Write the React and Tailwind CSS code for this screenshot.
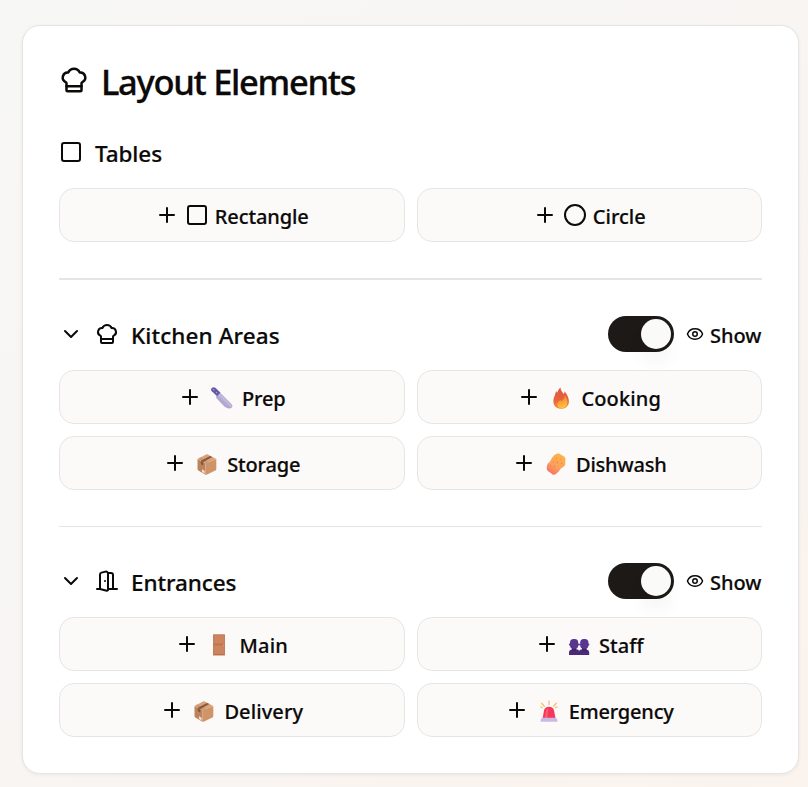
import { useState } from 'react'
import { ChefHat, ChevronDown, Circle, Eye, Plus, Square } from 'lucide-react'

function DoorIcon() {
  return (
    <svg
      width="24"
      height="24"
      viewBox="0 0 24 24"
      fill="none"
      stroke="currentColor"
      strokeWidth="2"
      strokeLinecap="round"
      strokeLinejoin="round"
    >
      <path d="M13 4h3a2 2 0 0 1 2 2v14" />
      <path d="M2 20h3" />
      <path d="M13 20h9" />
      <path d="M10 12v.01" />
      <path d="M13 4.562v16.157a1 1 0 0 1-1.242.97L5 20V5.562a2 2 0 0 1 1.515-1.94l4-1A2 2 0 0 1 13 4.561Z" />
    </svg>
  )
}

// Small coloured glyphs for the area buttons, drawn on a 28x24 box.
function Glyph({ children }) {
  return (
    <svg width="28" height="24" viewBox="0 0 28 24" className="mt-[3px] shrink-0">
      {children}
    </svg>
  )
}

function Knife() {
  return (
    <Glyph>
      <path d="M8.200 9.500 12.500 6 23.700 17.300c1.300 1.600.8 3.400-.9 3.900-2.800.7-5.500-.5-7.400-2.700L8.700 11.400c-.6-.7-.9-1.300-.5-1.900Z" fill="#b3a6d2" />
      <path d="m12.300 6.500 11.100 11.500c.9 1.100.4 2.300-.6 2.500L10.200 8.300Z" fill="#c2b8dc" />
      <path d="M3.800.9c1.100-1.100 2.800-.9 3.900.1l4.800 4.800-3.500 3.400-5.200-4.900C2.700 3.200 2.800 2 3.800.9Z" fill="#655ca4" />
      <circle cx="5.700" cy="2.700" r=".6" fill="#b9b2dc" />
      <circle cx="8.600" cy="5.600" r=".6" fill="#b9b2dc" />
    </Glyph>
  )
}

function Package() {
  return (
    <Glyph>
      <path d="m4.500 6 8 4.300v11.500l-7.100-4.200c-.6-.3-.9-.8-.9-1.400Z" fill="#bd835c" />
      <path d="M23.300 6 12.500 10.300v11.500c.6.200 1 .1 1.600-.2l8.300-4c.6-.3.9-.8.9-1.400Z" fill="#cf9468" />
      <path d="M4.500 6 13 1.500c.6-.3 1.200-.3 1.800 0L23.300 6l-10.800 4.500Z" fill="#d9a379" />
      <path d="m5.400 5.500 8 4.600 2.300-.9-8.300-4.700Z" fill="#cc966c" />
      <path d="M7.800 7.800 17 2.900l2.300 1.200-9 5Z" fill="#85593f" />
      <path d="M7.800 7.800v3.400l2.500 1.400V9.100Z" fill="#85593f" />
      <path d="m9 16.300 2.600 1.500v2.700L9 19Z" fill="#f3dfd2" />
    </Glyph>
  )
}

function Fire() {
  return (
    <Glyph>
      <defs>
        <linearGradient id="flame" x1="0" y1="0" x2="0" y2="1">
          <stop offset="0" stopColor="#e0553f" />
          <stop offset=".6" stopColor="#e8633c" />
          <stop offset="1" stopColor="#f4903c" />
        </linearGradient>
        <linearGradient id="ember" x1=".3" y1="0" x2=".6" y2="1">
          <stop offset="0" stopColor="#f07a3a" />
          <stop offset="1" stopColor="#ffc93c" />
        </linearGradient>
      </defs>
      <path d="M13.600.5c-.3 3 1.700 4.400 3.200 6.600.7-.8.8-1.600.6-2.800 2.700 2.800 4.700 6.800 4.500 10.400-.2 4.300-3.200 7-7.600 7-4.500 0-7.700-2.600-7.900-6.800-.1-2.800.7-4.800 1.600-6.800.4-1.300.5-2.800 1.200-4 .2.700.5 1.200 1 1.700C11 3.800 11.900 1.700 13.600.5Z" fill="url(#flame)" />
      <path d="M17.700 8.600c.1 2.800-1.700 4.300-3.400 5.800-.4-.6-.6-1-.5-1.600-2.100 1.300-3.700 3-3.600 5 .1 2.200 1.800 3.500 4.200 3.500 3.800 0 6-2.600 6-6 0-2.600-1.100-5.100-2.700-6.700Z" fill="url(#ember)" />
    </Glyph>
  )
}

function Sponge() {
  return (
    <Glyph>
      <defs>
        <linearGradient id="sponge" x1=".8" y1="0" x2=".2" y2="1">
          <stop offset="0" stopColor="#ffb445" />
          <stop offset=".6" stopColor="#fb9f60" />
          <stop offset="1" stopColor="#f66b62" />
        </linearGradient>
      </defs>
      <path d="M14.500.9c1.500-.6 3-.4 4.300.6 1.200 1.100 2.200 1 3.400 2 1.300 1.100 1.400 2.500 1.200 4-.3 1.500.2 2.700-.3 4.200-.7 1.800-2.400 2.300-3.700 3.500-1.500 1.400-2.100 3-3.700 4.400-1.400 1.200-2.600 2.500-4.300 2.200-1.500-.3-2-1.600-3.400-2.300-1.500-.7-2.900-1.600-3.200-3.400-.2-1.500.1-3 .4-4.200.5-1.700 2-2.300 2.900-3.700 1.400-2.300 2.900-6 6.400-7.300Z" fill="url(#sponge)" />
      <g fill="#e0803f">
        <circle cx="14.500" cy="5" r=".6" />
        <circle cx="18.800" cy="6" r=".6" />
        <circle cx="11.300" cy="9" r=".6" />
        <circle cx="15.500" cy="9.500" r=".7" />
        <circle cx="19.500" cy="10.500" r=".6" />
        <circle cx="8.600" cy="12.500" r=".6" />
        <circle cx="12.500" cy="13.300" r=".6" />
      </g>
    </Glyph>
  )
}

function Door() {
  return (
    <Glyph>
      <rect x="8" y=".2" width="12" height="21.300" rx=".6" fill="#c57c57" />
      <rect x="9.200" y="1.500" width="9.600" height="8.500" fill="#cd8560" />
      <rect x="9.200" y="11.900" width="9.600" height="8.500" fill="#cd8560" />
      <path d="M9.200 10h9.600M9.200 20.400h9.600" stroke="#b46a48" strokeWidth=".7" />
      <circle cx="18.600" cy="11" r=".7" fill="#e9a45c" />
    </Glyph>
  )
}

function People() {
  return (
    <Glyph>
      <path d="M4 21v-2.500c0-1.800 1.400-3 3.300-3h4.200c1.200 0 2.200.5 2.700 1.400.5-.9 1.400-1.400 2.600-1.400H21c1.800 0 3.200 1.200 3.200 3V21Z" fill="#4b2a78" />
      <path d="M6.800 12.700h4.600v4.500H6.800ZM17 12.700h4.600v4.500H17Z" fill="#41246c" />
      <rect x="5" y="5" width="8.200" height="9.700" rx="3.500" fill="#5a3690" />
      <rect x="15.200" y="5" width="8.200" height="9.700" rx="3.500" fill="#5a3690" />
      <circle cx="4.900" cy="10.600" r="1" fill="#5a3690" />
      <circle cx="13.300" cy="10.600" r="1" fill="#5a3690" />
      <circle cx="15.100" cy="10.600" r="1" fill="#5a3690" />
      <circle cx="23.400" cy="10.600" r="1" fill="#5a3690" />
    </Glyph>
  )
}

function Siren() {
  return (
    <Glyph>
      <g stroke="#f7bd6c" strokeWidth="1.300" strokeLinecap="round">
        <path d="M14 .8v3.800M6.700 3.300l2.600 2.900M21.300 3.300l-2.600 2.900M5.800 7l1.400.7M22.200 7l-1.400.7" />
      </g>
      <path d="M7.500 18.500 9 10.500C9.500 8 11.300 6.800 14 6.800s4.500 1.200 5 3.700l1.500 8Z" fill="#f5385a" />
      <path d="M9.800 18 11.200 10.800c.3-1.500 1-2.200 2-2.500L12.400 18Z" fill="#fb5f76" />
      <path d="M5.500 21c0-2 1-3.300 2.600-3.300h11.800c1.600 0 2.600 1.300 2.600 3.300 0 .5-.3.800-.8.800H6.300c-.5 0-.8-.3-.8-.8Z" fill="#c9b9e4" />
    </Glyph>
  )
}

function AddButton({ icon, label, labelClass = 'tracking-[-0.2px]' }) {
  return (
    <button
      type="button"
      className="flex h-[54px] items-center justify-center gap-1.5 rounded-[15px] border border-[#e7e5e4] bg-[#fcfaf9] hover:bg-stone-100"
    >
      <Plus size={24} className="shrink-0" />
      {icon}
      <span className={`mt-[3px] text-[20px] leading-[30px] font-medium whitespace-nowrap [-webkit-text-stroke:0.2px] ${labelClass}`}>
        {label}
      </span>
    </button>
  )
}

function Switch({ checked, onChange }) {
  return (
    <button
      type="button"
      role="switch"
      aria-checked={checked}
      onClick={() => onChange(!checked)}
      className={`flex h-9 w-[66px] items-center rounded-full p-[3px] ${checked ? 'justify-end bg-[#1c1917]' : 'justify-start bg-stone-200'}`}
    >
      <span className="size-[30px] rounded-full bg-[#fafaf9] shadow-[0_15px_22px_-4px_rgba(0,0,0,0.08)]" />
    </button>
  )
}

function SectionHeader({ icon, title, titleClass = '' }) {
  const [shown, setShown] = useState(true)
  return (
    <div className="flex h-9 items-center justify-between">
      <div className="flex items-center gap-3">
        <ChevronDown size={24} />
        {icon}
        <h3 className={`mt-[3px] text-[22.5px] leading-9 font-medium whitespace-nowrap [-webkit-text-stroke:0.2px] ${titleClass}`}>
          {title}
        </h3>
      </div>
      <div className="flex items-center gap-3">
        <Switch checked={shown} onChange={setShown} />
        <div className="flex items-center gap-1.5">
          <Eye size={18} />
          <span className="mt-[3px] w-[52px] text-[20px] leading-[30px] font-medium [-webkit-text-stroke:0.2px]">Show</span>
        </div>
      </div>
    </div>
  )
}

export default function App() {
  return (
    <div className="h-[787px] w-[808px] overflow-hidden bg-linear-to-br from-[#f7f7f6] via-[#f8f5f3] to-[#fbf3ed] pt-[25px] pl-[22px] font-['Noto_Sans',sans-serif] text-[#0c0a09]">
      <div className="h-[749px] w-[777px] rounded-[18px] border border-[#e7e5e4] bg-white px-9 pt-9 shadow-[0_1px_4px_rgba(0,0,0,0.06)]">
        <div className="flex h-9 items-center gap-3">
          <ChefHat size={30} className="shrink-0" />
          <h2 className="mt-1 text-[34.5px] leading-9 font-medium tracking-[-1.3px] whitespace-nowrap [-webkit-text-stroke:0.3px]">
            Layout Elements
          </h2>
        </div>

        <div className="mt-9 flex h-9 items-center gap-3">
          <Square size={24} />
          <h3 className="mt-[3px] text-[22.5px] leading-9 font-medium tracking-[-0.1px] [-webkit-text-stroke:0.2px]">Tables</h3>
        </div>
        <div className="mt-[18px] grid grid-cols-2 gap-3">
          <AddButton icon={<Square size={24} />} label="Rectangle" labelClass="tracking-[-0.1px]" />
          <AddButton icon={<Circle size={24} />} label="Circle" labelClass="tracking-normal" />
        </div>

        <div className="mt-9 h-0.5 bg-[#e5e5e5]" />

        <div className="mt-9">
          <SectionHeader icon={<ChefHat size={24} />} title="Kitchen Areas" titleClass="tracking-[0.1px]" />
        </div>
        <div className="mt-[18px] grid grid-cols-2 gap-3">
          <AddButton icon={<Knife />} label="Prep" />
          <AddButton icon={<Fire />} label="Cooking" labelClass="tracking-[0.15px]" />
          <AddButton icon={<Package />} label="Storage" />
          <AddButton icon={<Sponge />} label="Dishwash" />
        </div>

        <div className="mt-9 h-px bg-[#e5e5e5]" />

        <div className="mt-9">
          <SectionHeader icon={<DoorIcon />} title="Entrances" titleClass="tracking-[-0.1px]" />
        </div>
        <div className="mt-[18px] grid grid-cols-2 gap-3">
          <AddButton icon={<Door />} label="Main" labelClass="tracking-[0.2px]" />
          <AddButton icon={<People />} label="Staff" labelClass="tracking-normal" />
          <AddButton icon={<Package />} label="Delivery" labelClass="tracking-[0.1px]" />
          <AddButton icon={<Siren />} label="Emergency" />
        </div>
      </div>
    </div>
  )
}
